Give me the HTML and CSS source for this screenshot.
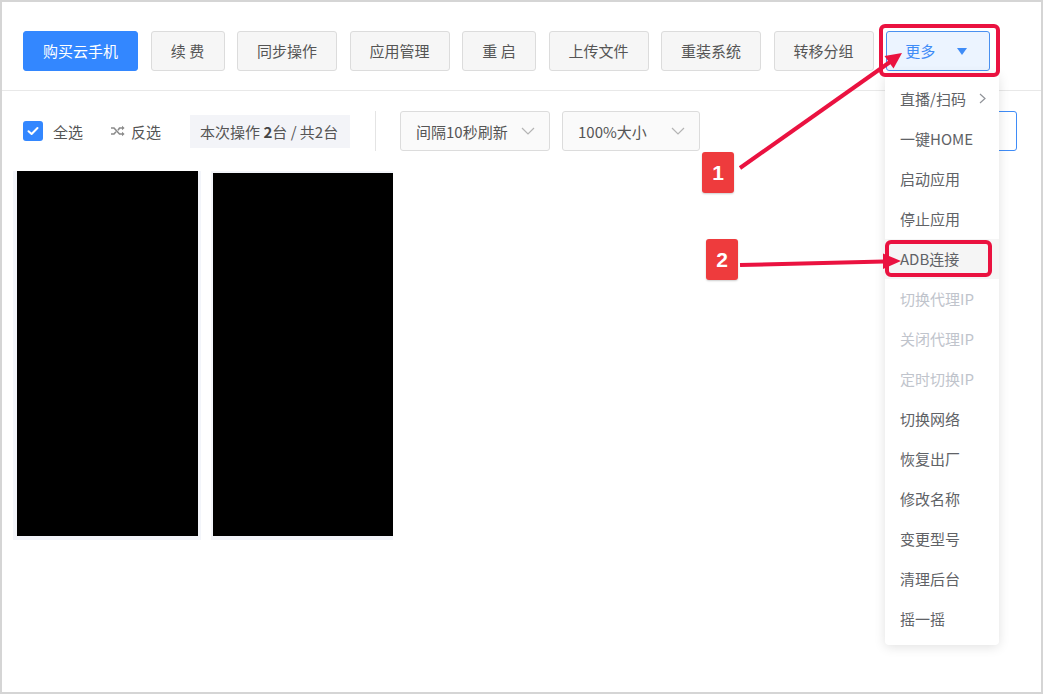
FILE: index.html
```html
<!DOCTYPE html>
<html lang="zh-CN">
<head>
<meta charset="utf-8">
<title>云手机</title>
<link rel="stylesheet" href="styles.css">
</head>
<body>
<div class="frame">
  <div class="toolbar">
    <button class="btn btn-primary">购买云手机</button>
    <button class="btn btn-short">续 费</button>
    <button class="btn">同步操作</button>
    <button class="btn">应用管理</button>
    <button class="btn btn-short">重 启</button>
    <button class="btn">上传文件</button>
    <button class="btn">重装系统</button>
    <button class="btn btn-group">转移分组</button>
    <button class="btn btn-more">更多 <span class="tri"></span></button>
  </div>

  <div class="filters">
    <label class="check">
      <span class="check-box"><svg width="12" height="10" viewBox="0 0 12 10"><path d="M1.5 5.2 L4.6 8 L10.5 2" fill="none" stroke="#fff" stroke-width="2" stroke-linecap="round" stroke-linejoin="round"/></svg></span>
      <span>全选</span>
    </label>
    <span class="invert">
      <svg width="15" height="12" viewBox="0 0 15 12"><path d="M1 3 H4 L9.5 9 H13 M1 9 H4 L6 6.8 M8 5.2 L9.5 3 H13" fill="none" stroke="#8a8a8a" stroke-width="1.6"/><path d="M12 0.8 L14.6 3 L12 5.2 Z M12 6.8 L14.6 9 L12 11.2 Z" fill="#8a8a8a"/></svg>
      <span>反选</span>
    </span>
    <span class="count">本次操作 <b>2</b>台 / 共2台</span>
    <span class="divider"></span>
    <div class="select select-wide"><span>间隔10秒刷新</span><svg width="14" height="8" viewBox="0 0 14 8"><path d="M1 1 L7 7 L13 1" fill="none" stroke="#b4b4b4" stroke-width="1.2"/></svg></div>
    <div class="select select-narrow"><span>100%大小</span><svg width="14" height="8" viewBox="0 0 14 8"><path d="M1 1 L7 7 L13 1" fill="none" stroke="#b4b4b4" stroke-width="1.2"/></svg></div>
    <div class="search"></div>
  </div>

  <div class="cards">
    <div class="card card-a"><div class="screen"></div></div>
    <div class="card card-b"><div class="screen"></div></div>
  </div>

  <ul class="menu">
    <li class="menu-item has-sub">直播/扫码<span class="sub-arrow"><svg width="7" height="11" viewBox="0 0 7 11"><path d="M1 1 L6 5.5 L1 10" fill="none" stroke="#909399" stroke-width="1.2"/></svg></span></li>
    <li class="menu-item">一键HOME</li>
    <li class="menu-item">启动应用</li>
    <li class="menu-item">停止应用</li>
    <li class="menu-item is-hover">ADB连接</li>
    <li class="menu-item is-disabled">切换代理IP</li>
    <li class="menu-item is-disabled">关闭代理IP</li>
    <li class="menu-item is-disabled">定时切换IP</li>
    <li class="menu-item">切换网络</li>
    <li class="menu-item">恢复出厂</li>
    <li class="menu-item">修改名称</li>
    <li class="menu-item">变更型号</li>
    <li class="menu-item">清理后台</li>
    <li class="menu-item">摇一摇</li>
  </ul>

  <svg class="marks" width="1043" height="694" viewBox="0 0 1043 694">
    <rect x="881" y="26" width="117" height="49" rx="4" fill="none" stroke="#ea1240" stroke-width="4"/>
    <rect x="887" y="242" width="103" height="33" rx="4" fill="none" stroke="#ea1240" stroke-width="4"/>
    <line x1="740" y1="168" x2="890" y2="62" stroke="#ea1240" stroke-width="4"/>
    <polygon points="902,53 893.5,68.5 884.5,56" fill="#ea1240"/>
    <line x1="740" y1="265" x2="884" y2="261.5" stroke="#ea1240" stroke-width="4"/>
    <polygon points="901,261 883,253.5 883,269" fill="#ea1240"/>
  </svg>
  <div class="tag tag-1">1</div>
  <div class="tag tag-2">2</div>
</div>
</body>
</html>
```

FILE: styles.css
```css
* { box-sizing: border-box; }
html, body { margin: 0; padding: 0; background: #fff; }
body {
  font-family: "Noto Sans CJK SC", "Noto Sans", sans-serif;
  font-size: 15px;
  color: #555;
}
.frame {
  position: relative;
  width: 1043px;
  height: 694px;
  border: 2px solid #d5d5d5;
  background: #fff;
  overflow: hidden;
}

/* toolbar */
.toolbar {
  display: flex;
  gap: 12.5px;
  padding: 29px 0 19px 21px;
  border-bottom: 1px solid #e8e8e8;
}
.btn {
  height: 40px;
  width: 100px;
  padding: 0;
  border: 1px solid #dcdcdc;
  border-radius: 3px;
  background: #f6f6f6;
  color: #555;
  font: inherit;
  font-size: 15px;
  line-height: 38px;
  white-space: pre;
  display: flex;
  align-items: center;
  justify-content: center;
}
.btn-short { width: 74px; }
.btn-group { width: 100px; }
.btn-primary {
  background: #3387ff;
  border-color: #3387ff;
  color: #fff;
  width: 115px;
}
.btn-more {
  width: 104px;
  background: #ecf4ff;
  border-color: #4a90f0;
  color: #3f8cf7;
  gap: 18px;
  padding: 0 4px 0 0;
}
.tri {
  width: 0;
  height: 0;
  border-left: 5px solid transparent;
  border-right: 5px solid transparent;
  border-top: 7px solid #3f8cf7;
}

/* filters row */
.filters {
  display: flex;
  align-items: center;
  padding: 20px 24px 0 21px;
  height: 60px;
}
.check {
  display: flex;
  align-items: center;
  gap: 10px;
}
.check-box {
  width: 20px;
  height: 20px;
  border-radius: 3px;
  background: #3387ff;
  display: flex;
  align-items: center;
  justify-content: center;
}
.invert {
  display: flex;
  align-items: center;
  gap: 6px;
  margin-left: 27px;
}
.count {
  margin-left: 29px;
  width: 160px;
  height: 33px;
  background: #f3f4f8;
  padding-left: 10px;
  display: flex;
  align-items: center;
  white-space: pre;
}
.count b { font-weight: 700; color: #444; }
.divider {
  width: 1px;
  height: 40px;
  background: #e4e4e4;
  margin-left: 25px;
}
.select {
  height: 40px;
  border: 1px solid #dcdcdc;
  border-radius: 3px;
  background: #fafafa;
  display: flex;
  align-items: center;
  justify-content: space-between;
  padding: 0 14px 0 15px;
}
.select-wide { width: 150px; margin-left: 24px; }
.select-narrow { width: 138px; margin-left: 12px; }
.search {
  margin-left: auto;
  width: 125px;
  height: 40px;
  border: 1px solid #3f8cf7;
  border-radius: 3px;
}

/* phone cards */
.cards {
  display: flex;
  gap: 10px;
  padding: 20px 0 0 11px;
  align-items: flex-start;
}
.card {
  background: #f3f5fa;
  height: 369px;
}
.card-a { width: 188px; padding: 0 3px 4px 4px; }
.card-b { width: 182px; padding: 2px 0 4px 2px; }
.screen { width: 100%; height: 100%; background: #000; }

/* dropdown */
.menu {
  position: absolute;
  left: 883px;
  top: 72px;
  width: 114px;
  margin: 0;
  padding: 5px 0 6px;
  list-style: none;
  background: #fff;
  border-radius: 4px;
  box-shadow: 0 2px 12px rgba(0, 0, 0, 0.12);
}
.menu-item {
  height: 40px;
  line-height: 40px;
  padding-left: 15px;
  color: #606266;
  white-space: nowrap;
  position: relative;
}
.menu-item.is-hover { background: #f5f5f5; }
.menu-item.is-disabled { color: #c0c4cc; }
.sub-arrow {
  position: absolute;
  right: 13px;
  top: 0;
  display: flex;
  align-items: center;
  height: 38px;
}

/* annotations */
.marks {
  position: absolute;
  left: -2px;
  top: -2px;
  pointer-events: none;
}
.tag {
  position: absolute;
  width: 32px;
  height: 41px;
  background: #ee3b3d;
  border-radius: 3px;
  color: #fff;
  font-family: "Liberation Sans", "Noto Sans", sans-serif;
  font-weight: 700;
  font-size: 21px;
  display: flex;
  align-items: center;
  justify-content: center;
  box-shadow: 0 1px 2px rgba(0, 0, 0, 0.2);
}
.tag-1 { left: 700px; top: 150px; }
.tag-2 { left: 704px; top: 237px; }
```
